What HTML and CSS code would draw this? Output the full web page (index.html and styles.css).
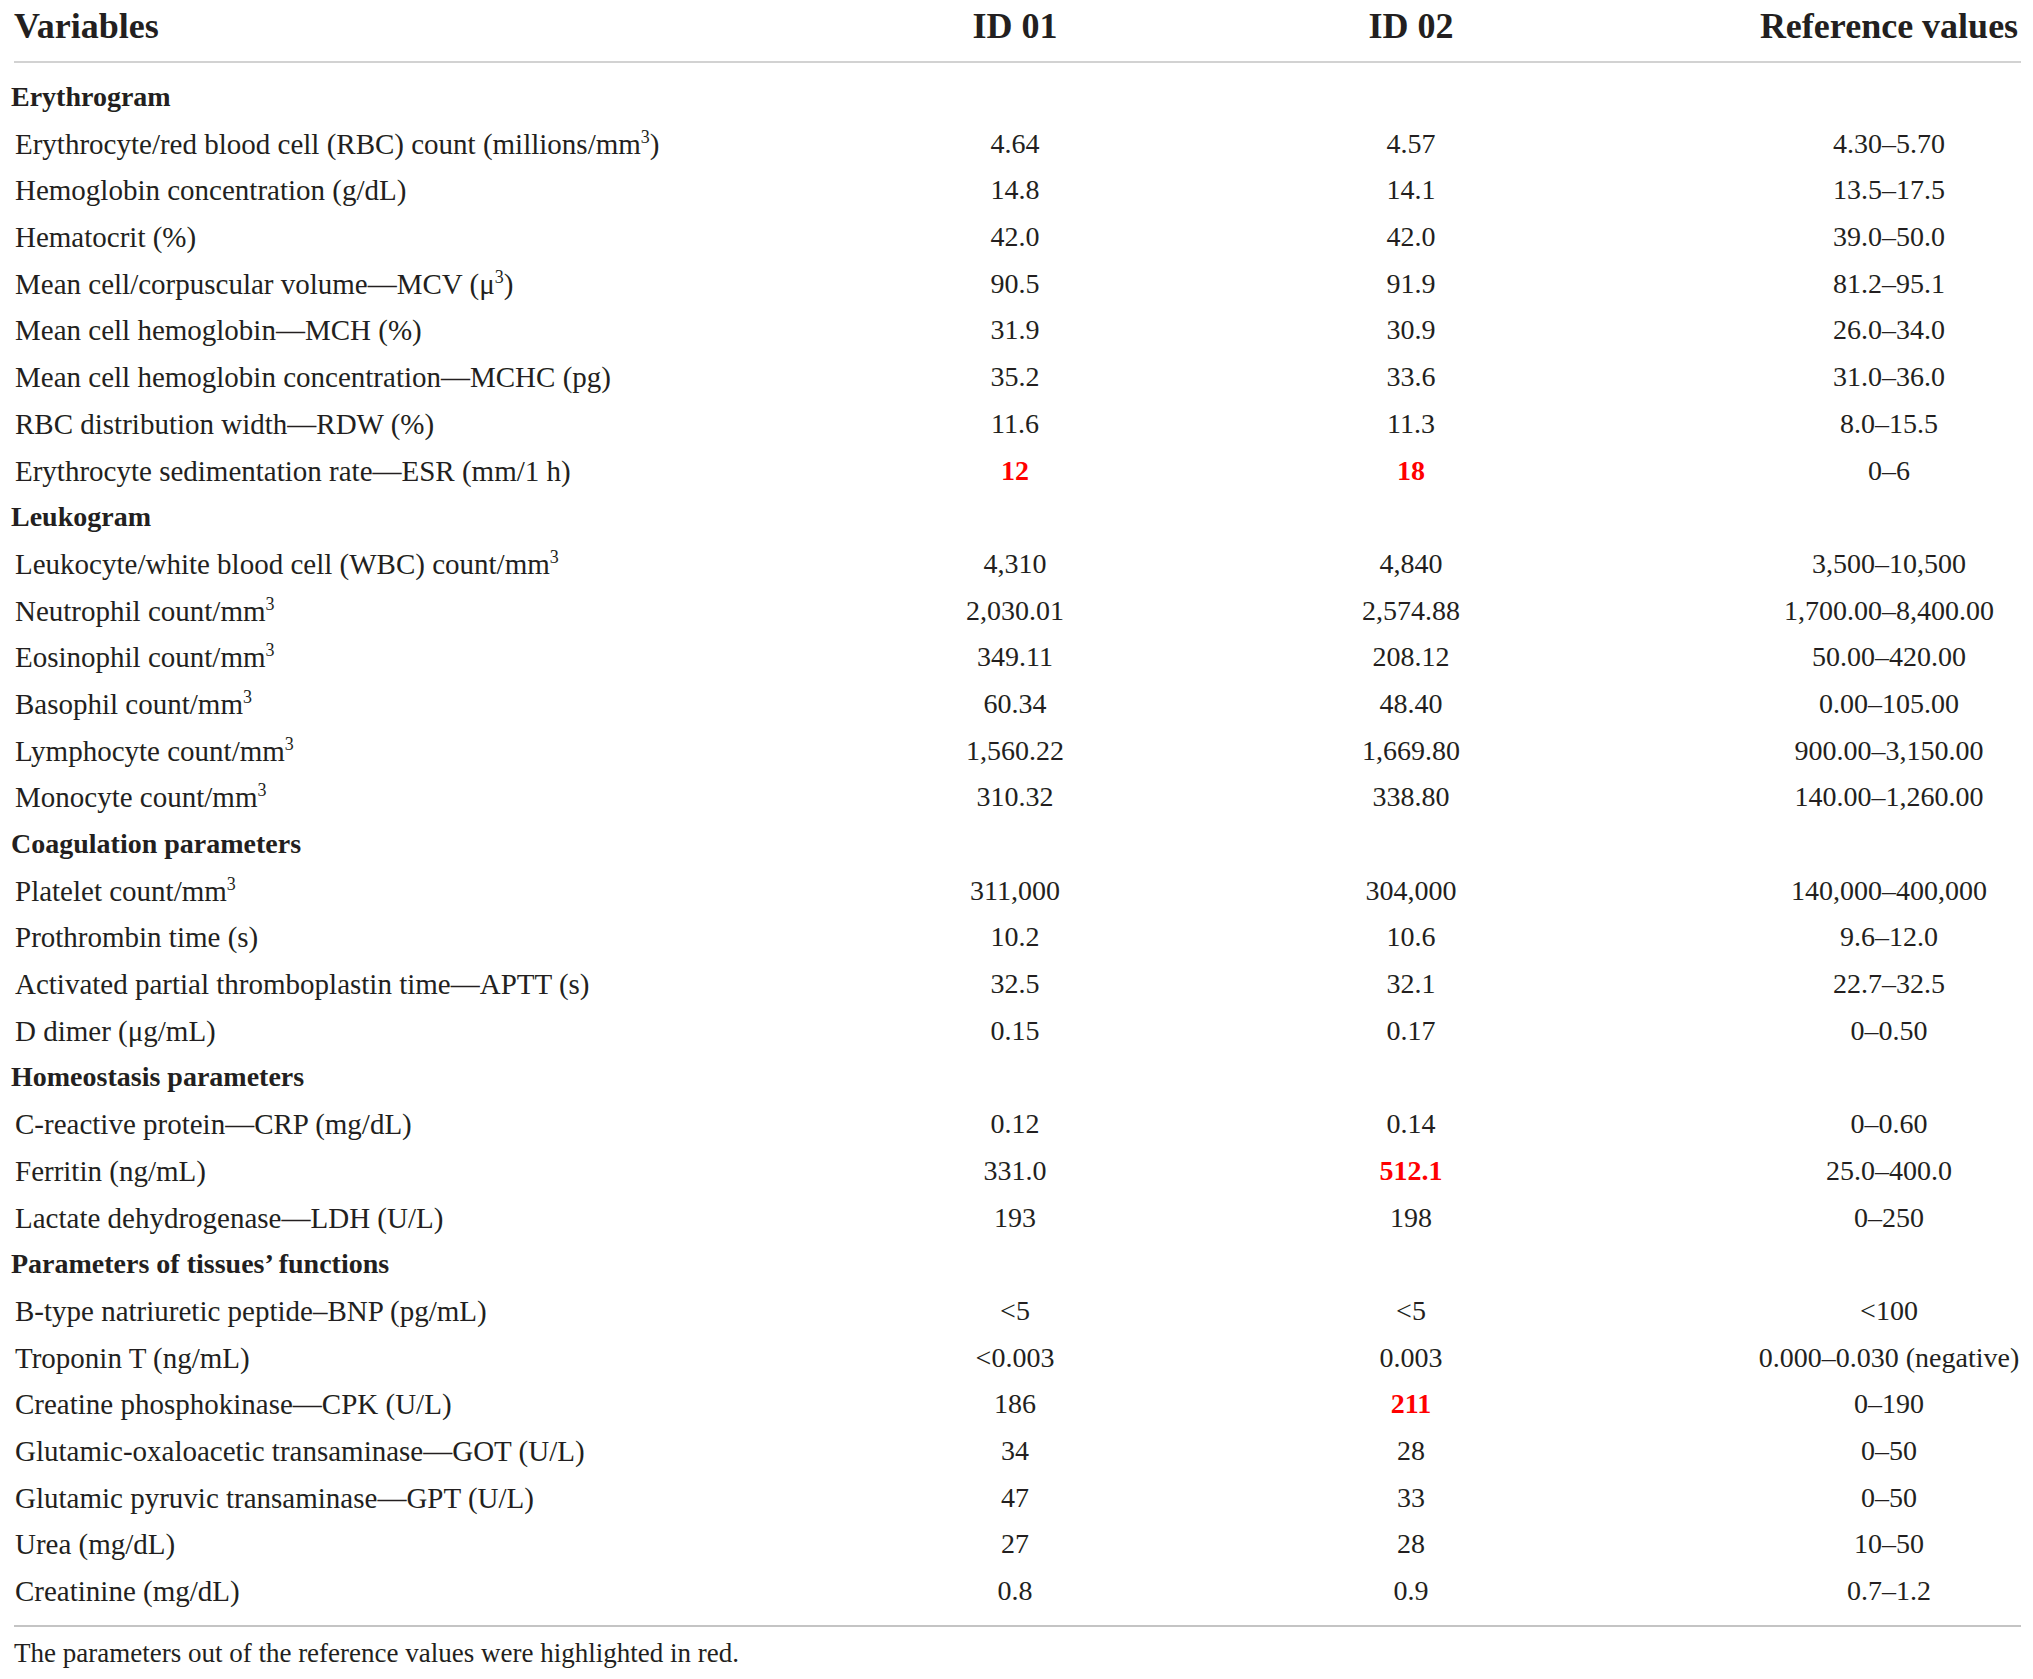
FILE: index.html
```html
<!DOCTYPE html>
<html lang="en">
<head>
<meta charset="utf-8">
<title>Laboratory parameters</title>
<link rel="stylesheet" href="styles.css">
</head>
<body>
<div class="wrap">
<table class="lab">
<colgroup><col class="c1"><col class="c2"><col class="c3"><col class="c4"></colgroup>
<thead>
<tr><th class="var">Variables</th><th>ID 01</th><th>ID 02</th><th class="ref">Reference values</th></tr>
</thead>
<tbody>
<tr class="sec first"><td colspan="4">Erythrogram</td></tr>
<tr><td>Erythrocyte/red blood cell (RBC) count (millions/mm<sup>3</sup>)</td><td>4.64</td><td>4.57</td><td class="ref">4.30–5.70</td></tr>
<tr><td>Hemoglobin concentration (g/dL)</td><td>14.8</td><td>14.1</td><td class="ref">13.5–17.5</td></tr>
<tr><td>Hematocrit (%)</td><td>42.0</td><td>42.0</td><td class="ref">39.0–50.0</td></tr>
<tr><td>Mean cell/corpuscular volume—MCV (μ<sup>3</sup>)</td><td>90.5</td><td>91.9</td><td class="ref">81.2–95.1</td></tr>
<tr><td>Mean cell hemoglobin—MCH (%)</td><td>31.9</td><td>30.9</td><td class="ref">26.0–34.0</td></tr>
<tr><td>Mean cell hemoglobin concentration—MCHC (pg)</td><td>35.2</td><td>33.6</td><td class="ref">31.0–36.0</td></tr>
<tr><td>RBC distribution width—RDW (%)</td><td>11.6</td><td>11.3</td><td class="ref">8.0–15.5</td></tr>
<tr><td>Erythrocyte sedimentation rate—ESR (mm/1 h)</td><td class="hi">12</td><td class="hi">18</td><td class="ref">0–6</td></tr>
<tr class="sec"><td colspan="4">Leukogram</td></tr>
<tr><td>Leukocyte/white blood cell (WBC) count/mm<sup>3</sup></td><td>4,310</td><td>4,840</td><td class="ref">3,500–10,500</td></tr>
<tr><td>Neutrophil count/mm<sup>3</sup></td><td>2,030.01</td><td>2,574.88</td><td class="ref">1,700.00–8,400.00</td></tr>
<tr><td>Eosinophil count/mm<sup>3</sup></td><td>349.11</td><td>208.12</td><td class="ref">50.00–420.00</td></tr>
<tr><td>Basophil count/mm<sup>3</sup></td><td>60.34</td><td>48.40</td><td class="ref">0.00–105.00</td></tr>
<tr><td>Lymphocyte count/mm<sup>3</sup></td><td>1,560.22</td><td>1,669.80</td><td class="ref">900.00–3,150.00</td></tr>
<tr><td>Monocyte count/mm<sup>3</sup></td><td>310.32</td><td>338.80</td><td class="ref">140.00–1,260.00</td></tr>
<tr class="sec"><td colspan="4">Coagulation parameters</td></tr>
<tr><td>Platelet count/mm<sup>3</sup></td><td>311,000</td><td>304,000</td><td class="ref">140,000–400,000</td></tr>
<tr><td>Prothrombin time (s)</td><td>10.2</td><td>10.6</td><td class="ref">9.6–12.0</td></tr>
<tr><td>Activated partial thromboplastin time—APTT (s)</td><td>32.5</td><td>32.1</td><td class="ref">22.7–32.5</td></tr>
<tr><td>D dimer (μg/mL)</td><td>0.15</td><td>0.17</td><td class="ref">0–0.50</td></tr>
<tr class="sec"><td colspan="4">Homeostasis parameters</td></tr>
<tr><td>C-reactive protein—CRP (mg/dL)</td><td>0.12</td><td>0.14</td><td class="ref">0–0.60</td></tr>
<tr><td>Ferritin (ng/mL)</td><td>331.0</td><td class="hi">512.1</td><td class="ref">25.0–400.0</td></tr>
<tr><td>Lactate dehydrogenase—LDH (U/L)</td><td>193</td><td>198</td><td class="ref">0–250</td></tr>
<tr class="sec"><td colspan="4">Parameters of tissues’ functions</td></tr>
<tr><td>B-type natriuretic peptide–BNP (pg/mL)</td><td>&lt;5</td><td>&lt;5</td><td class="ref">&lt;100</td></tr>
<tr><td>Troponin T (ng/mL)</td><td>&lt;0.003</td><td>0.003</td><td class="ref">0.000–0.030 (negative)</td></tr>
<tr><td>Creatine phosphokinase—CPK (U/L)</td><td>186</td><td class="hi">211</td><td class="ref">0–190</td></tr>
<tr><td>Glutamic-oxaloacetic transaminase—GOT (U/L)</td><td>34</td><td>28</td><td class="ref">0–50</td></tr>
<tr><td>Glutamic pyruvic transaminase—GPT (U/L)</td><td>47</td><td>33</td><td class="ref">0–50</td></tr>
<tr><td>Urea (mg/dL)</td><td>27</td><td>28</td><td class="ref">10–50</td></tr>
<tr class="last"><td>Creatinine (mg/dL)</td><td>0.8</td><td>0.9</td><td class="ref">0.7–1.2</td></tr>
</tbody>
</table>
<p class="note">The parameters out of the reference values were highlighted in red.</p>
</div>
</body>
</html>
```
FILE: styles.css
```css
html, body {
  margin: 0;
  padding: 0;
  background: #ffffff;
}

body {
  font-family: "Liberation Serif", "Times New Roman", serif;
  color: #231f20;
}

.wrap {
  padding-left: 14px;
  width: 2007px;
}

.lab {
  width: 2007px;
  table-layout: fixed;
  border-collapse: collapse;
  border-spacing: 0;
}

.c1 { width: 801px; }
.c2 { width: 400px; }
.c3 { width: 392px; }
.c4 { width: 414px; }

.lab th {
  font-size: 36px;
  font-weight: bold;
  line-height: 46px;
  padding: 3px 0 12px 0;
  text-align: center;
  border-bottom: 2px solid #d2d2d2;
  color: #231f20;
  white-space: nowrap;
}

.lab th.var {
  text-align: left;
}

.lab th.ref {
  padding-left: 150px;
}

.lab td {
  font-size: 28px;
  line-height: 46.68px;
  padding: 0;
  text-align: center;
  white-space: nowrap;
}

.lab td:first-child {
  font-size: 29px;
  text-align: left;
  padding-left: 1px;
}

.lab td.ref {
  padding-left: 150px;
}

.lab tr.sec td {
  font-size: 28px;
  font-weight: bold;
  padding-left: 0;
  position: relative;
  left: -3px;
}

.lab tr.first td {
  padding-top: 11px;
}

.lab tr.last td {
  padding-bottom: 10px;
  border-bottom: 2px solid #c4c4c4;
}

.lab td.hi {
  color: #ff0000;
  font-weight: bold;
}

sup {
  font-size: 0.62em;
  line-height: 0;
  vertical-align: 0.62em;
}

.note {
  margin: 0;
  padding-top: 11px;
  font-size: 27px;
  line-height: 30px;
}
```
